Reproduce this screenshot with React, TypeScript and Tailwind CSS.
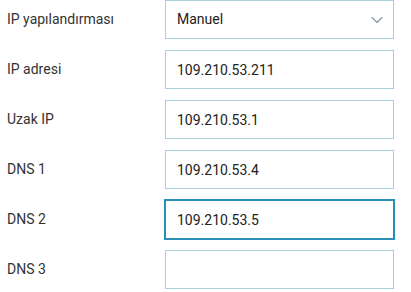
import { ChevronDown } from "lucide-react";

const rows = [
  { label: "IP adresi", value: "109.210.53.211" },
  { label: "Uzak IP", value: "109.210.53.1" },
  { label: "DNS 1", value: "109.210.53.4" },
  { label: "DNS 2", value: "109.210.53.5", focused: true },
  { label: "DNS 3", value: "" },
];

function Row({ label, children }: { label: string; children: React.ReactNode }) {
  return (
    <div className="flex h-[39px] items-center">
      <label className="w-[165px] pl-[7px] text-[14px] text-[#333]">{label}</label>
      {children}
    </div>
  );
}

export default function App() {
  return (
    <div className="flex w-[411px] flex-col gap-[11px] bg-white font-['Roboto',sans-serif]">
      <Row label="IP yapılandırması">
        <div className="flex h-[39px] w-[229px] items-center justify-between border border-[#a9cfdc] pl-[11px] pr-[6px] text-[14px] text-[#222]">
          <span>Manuel</span>
          <ChevronDown className="h-5 w-5 text-[#8a9aa3]" strokeWidth={1.4} />
        </div>
      </Row>
      {rows.map((r) => (
        <Row key={r.label} label={r.label}>
          <input
            readOnly
            value={r.value}
            className={`h-[39px] w-[229px] border px-[11px] text-[14px] text-[#222] outline-none ${
              r.focused ? "border-[#2a8fb8] ring-1 ring-[#2a8fb8]" : "border-[#a9cfdc]"
            }`}
          />
        </Row>
      ))}
    </div>
  );
}
